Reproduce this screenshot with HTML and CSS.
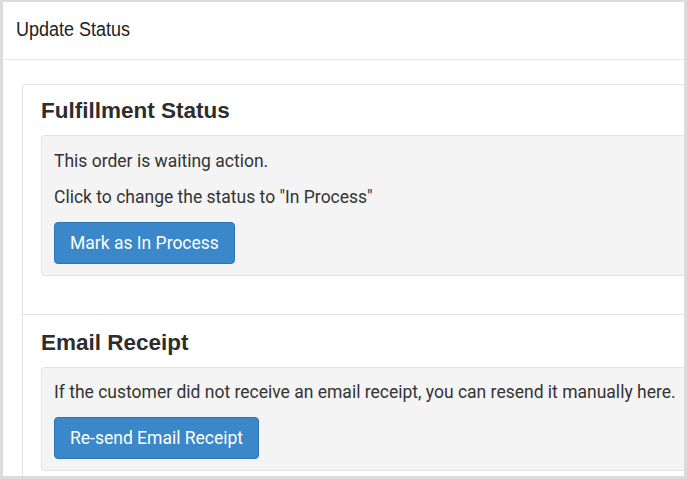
FILE: index.html
```
<!DOCTYPE html>
<html>
<head>
<meta charset="utf-8">
<link rel="stylesheet" href="styles.css">
</head>
<body>
<div class="panel">
  <div class="panel-head"><span class="panel-title">Update Status</span></div>
  <div class="panel-body">
    <div class="card">
      <section class="sec">
        <h2 class="sec-title">Fulfillment Status</h2>
        <div class="well">
          <p class="well-text">This order is waiting action.</p>
          <p class="well-text">Click to change the status to "In Process"</p>
          <button class="btn">Mark as In Process</button>
        </div>
      </section>
      <section class="sec sec-email">
        <h2 class="sec-title">Email Receipt</h2>
        <div class="well well-email">
          <p class="well-text">If the customer did not receive an email receipt, you can resend it manually here.</p>
          <button class="btn">Re-send Email Receipt</button>
        </div>
      </section>
    </div>
  </div>
</div>
</body>
</html>
```
FILE: styles.css
```
html, body {
  margin: 0;
  height: 100%;
}
body {
  background: #dcdcdc;
  padding: 2px 3px 0 3px;
  box-sizing: border-box;
  overflow: hidden;
}
.panel {
  background: #fff;
  height: 474px;
  overflow: hidden;
}
.panel-head {
  height: 57px;
  line-height: 55px;
  border-bottom: 1px solid #e6e6e6;
  padding-left: 13px;
  font-family: "Liberation Sans", Arial, sans-serif;
  font-size: 20px;
  color: #222;
}
.panel-title {
  display: inline-block;
  transform: scaleX(0.9);
  transform-origin: left center;
}
.panel-body {
  padding: 24px 0 0 19px;
}
.card {
  border: 1px solid #e2e2e2;
  border-right: 0;
  border-bottom: 0;
  border-radius: 4px 0 0 0;
  margin-right: -40px;
  height: 420px;
}
.sec {
  padding: 14px 19px 38px 18px;
}
.sec-email {
  border-top: 1px solid #e2e2e2;
  padding-top: 16px;
  padding-bottom: 0;
}
.sec-title {
  margin: 0 0 12px;
  font-family: "Liberation Sans", Arial, sans-serif;
  font-weight: bold;
  font-size: 22.5px;
  line-height: 24px;
  color: #2d2d2d;
}
.well {
  background: #f4f4f4;
  border: 1px solid #e3e3e3;
  border-radius: 3px;
  padding: 14px 12px 11px 12px;
}
.well-email {
  padding-top: 13px;
}
.well-text {
  margin: 0 0 14px;
  font-family: Roboto, "Liberation Sans", sans-serif;
  font-size: 17.5px;
  line-height: 22px;
  color: #333;
}
.btn {
  display: block;
  height: 42px;
  padding: 0 15px;
  background: #3a87c9;
  border: 1px solid #2c74b6;
  border-radius: 4px;
  color: #fff;
  font-family: Roboto, "Liberation Sans", sans-serif;
  font-size: 17.5px;
  line-height: 40px;
}
.well-text + .btn {
  margin-top: 2px;
}
```
